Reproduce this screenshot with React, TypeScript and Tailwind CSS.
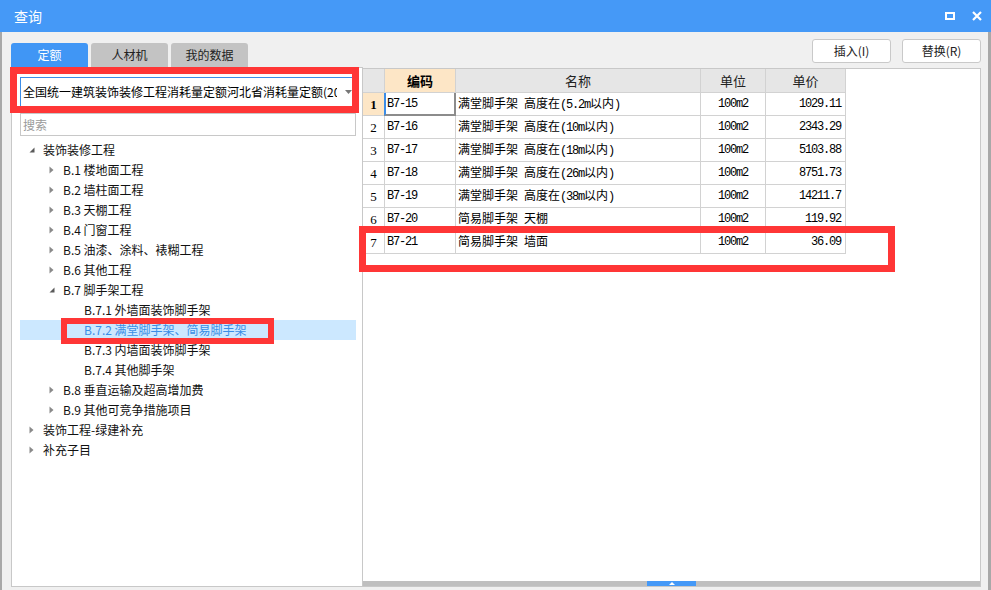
import React from "react";

type TreeNode = {
  label: string;
  level: 0 | 1 | 2;
  state?: "open" | "closed";
  selected?: boolean;
};

const tree: TreeNode[] = [
  { label: "装饰装修工程", level: 0, state: "open" },
  { label: "B.1 楼地面工程", level: 1, state: "closed" },
  { label: "B.2 墙柱面工程", level: 1, state: "closed" },
  { label: "B.3 天棚工程", level: 1, state: "closed" },
  { label: "B.4 门窗工程", level: 1, state: "closed" },
  { label: "B.5 油漆、涂料、裱糊工程", level: 1, state: "closed" },
  { label: "B.6 其他工程", level: 1, state: "closed" },
  { label: "B.7 脚手架工程", level: 1, state: "open" },
  { label: "B.7.1 外墙面装饰脚手架", level: 2 },
  { label: "B.7.2 满堂脚手架、简易脚手架", level: 2, selected: true },
  { label: "B.7.3 内墙面装饰脚手架", level: 2 },
  { label: "B.7.4 其他脚手架", level: 2 },
  { label: "B.8 垂直运输及超高增加费", level: 1, state: "closed" },
  { label: "B.9 其他可竞争措施项目", level: 1, state: "closed" },
  { label: "装饰工程-绿建补充", level: 0, state: "closed" },
  { label: "补充子目", level: 0, state: "closed" },
];

const rows = [
  { code: "B7-15", name: "满堂脚手架 高度在(5.2m以内)", unit: "100m2", price: "1029.11" },
  { code: "B7-16", name: "满堂脚手架 高度在(10m以内)", unit: "100m2", price: "2343.29" },
  { code: "B7-17", name: "满堂脚手架 高度在(18m以内)", unit: "100m2", price: "5103.88" },
  { code: "B7-18", name: "满堂脚手架 高度在(26m以内)", unit: "100m2", price: "8751.73" },
  { code: "B7-19", name: "满堂脚手架 高度在(38m以内)", unit: "100m2", price: "14211.7" },
  { code: "B7-20", name: "简易脚手架 天棚", unit: "100m2", price: "119.92" },
  { code: "B7-21", name: "简易脚手架 墙面", unit: "100m2", price: "36.09" },
];

const indent = ["pl-[8px]", "pl-[28px]", "pl-[49px]"];

// half-width latin text in the grid, like SimSun's ascii
const Mono = ({ children }: { children: React.ReactNode }) => (
  <span className="whitespace-pre font-['Liberation_Mono',monospace] text-[12px] tracking-[-1.2px]">
    {children}
  </span>
);

const MixedText = ({ text }: { text: string }) => {
  const parts = text.split(/([\x20-\x7e]+)/).filter((p) => p !== "");
  return (
    <span className="whitespace-pre">
      {parts.map((p, i) =>
        /^[\x20-\x7e]+$/.test(p) ? <Mono key={i}>{p}</Mono> : <span key={i}>{p}</span>
      )}
    </span>
  );
};

const Arrow = ({ state }: { state?: "open" | "closed" }) => {
  if (state === "open")
    return (
      <svg width="6" height="6" viewBox="0 0 6 6" className="ml-[1px]">
        <path d="M5.5 0.5 L5.5 5.5 L0.5 5.5 Z" fill="#5a5a5a" />
      </svg>
    );
  if (state === "closed")
    return (
      <svg width="5" height="8" viewBox="0 0 5 8" className="ml-[1px]">
        <path d="M0.5 0.5 L4.5 4 L0.5 7.5 Z" fill="#8a8a8a" />
      </svg>
    );
  return null;
};

export default function App() {
  return (
    <div className="relative flex h-[590px] w-[991px] flex-col overflow-hidden bg-[#f0f0f0] font-['Noto_Sans_CJK_SC','Noto_Sans',sans-serif] text-[12px] text-[#111]">
      {/* title bar */}
      <div className="flex h-[32px] shrink-0 items-center bg-[#4599f7] pl-[14px] pr-[9px] text-white">
        <span className="text-[14px] leading-none">查询</span>
        <div className="ml-auto flex items-center gap-[17px]">
          <div className="h-[8px] w-[10px] border-2 border-white" />
          <svg width="10" height="10" viewBox="0 0 10 10">
            <path d="M1 1 L9 9 M9 1 L1 9" stroke="#fff" strokeWidth="2.2" />
          </svg>
        </div>
      </div>

      <div className="flex flex-1 border-l-2 border-r-[3px] border-l-[#a8a8a8] border-r-[#a8a8a8] pl-[9px] pr-[7px]">
        {/* left column */}
        <div className="flex w-[352px] flex-col pt-[11px]">
          <div className="flex h-[24px] gap-[3px]">
            <div className="flex w-[77px] items-center justify-center rounded-t-[3px] bg-[#4096f5] text-white">
              定额
            </div>
            <div className="flex w-[77px] items-center justify-center rounded-t-[3px] bg-[#c3c3c3] text-[#222]">
              人材机
            </div>
            <div className="flex w-[77px] items-center justify-center rounded-t-[3px] bg-[#c3c3c3] text-[#222]">
              我的数据
            </div>
          </div>
          <div className="flex h-[520px] flex-col border border-[#c8c8c8] bg-white pl-[8px] pt-[9px]">
            <div className="flex h-[30px] w-[333px] items-center border border-[#3b8de8] bg-white pl-[2px]">
              <div className="w-[314px] overflow-hidden whitespace-nowrap text-[12px] leading-[14px] text-black">
                全国统一建筑装饰装修工程消耗量定额河北省消耗量定额(20
              </div>
              <svg width="7" height="4" viewBox="0 0 7 4" className="ml-[8px]">
                <path d="M0 0 L7 0 L3.5 4 Z" fill="#777" />
              </svg>
            </div>
            <div className="mt-[6px] flex h-[23px] w-[336px] items-center border border-[#c8c8c8] pl-[2px] text-[12px] text-[#9a9a9a]">
              搜索
            </div>
            <div className="mt-[4px] w-[336px]">
              {tree.map((n) => (
                <div
                  key={n.label}
                  className={`flex h-[20px] items-center ${indent[n.level]} ${
                    n.selected ? "bg-[#cce8ff] text-[#3a8ee6]" : "text-[#111]"
                  }`}
                >
                  <div className="flex w-[15px] items-center">
                    <Arrow state={n.state} />
                  </div>
                  <span className="whitespace-nowrap leading-none">{n.label}</span>
                </div>
              ))}
            </div>
          </div>
        </div>

        {/* right column */}
        <div className="flex flex-1 flex-col pt-[7px]">
          <div className="flex h-[24px] justify-end gap-[11px]">
            <button className="flex w-[79px] items-center justify-center rounded-[3px] border border-[#c9c9c9] bg-white text-[12px] text-[#222]">
              插入(I)
            </button>
            <button className="flex w-[79px] items-center justify-center rounded-[3px] border border-[#c9c9c9] bg-white text-[12px] text-[#222]">
              替换(R)
            </button>
          </div>
          <div className="mt-[5px] flex h-[519px] flex-col border-b border-r border-t border-[#c8c8c8] bg-white">
            <div className="flex flex-col text-black">
              <div className="flex h-[24px] text-[13px] leading-none">
                <div className="w-[22px] border-b border-r border-[#d2d2d2] bg-[#e6e6e6]" />
                <div className="flex w-[71px] items-center justify-center border-b border-r border-[#d2d2d2] bg-[#fde6c6] font-bold">
                  编码
                </div>
                <div className="flex w-[245px] items-center justify-center border-b border-r border-[#d2d2d2] bg-[#e6e6e6] text-[#222]">
                  名称
                </div>
                <div className="flex w-[65px] items-center justify-center border-b border-r border-[#d2d2d2] bg-[#e6e6e6] text-[#222]">
                  单位
                </div>
                <div className="flex w-[80px] items-center justify-center border-b border-r border-[#d2d2d2] bg-[#e6e6e6] text-[#222]">
                  单价
                </div>
              </div>
              {rows.map((r, i) => (
                <div key={r.code} className="flex h-[23px] leading-none">
                  <div
                    className={`flex w-[22px] items-center justify-center border-b border-r border-[#d2d2d2] font-['Liberation_Serif',serif] text-[13px] ${
                      i === 0 ? "bg-[#fde6c6] font-bold" : "bg-white"
                    }`}
                  >
                    {i + 1}
                  </div>
                  <div className="relative flex w-[71px] items-center border-b border-r border-[#d2d2d2] pl-[2px]">
                    {i === 0 && (
                      <div className="absolute -bottom-px -left-px -right-px top-0 border-b-2 border-l-2 border-r-2 border-b-[#8c8c8c] border-l-[#3b8de8] border-r-[#8c8c8c]" />
                    )}
                    <Mono>{r.code}</Mono>
                  </div>
                  <div className="flex w-[245px] items-center border-b border-r border-[#d2d2d2] pl-[2px] text-[12px]">
                    <MixedText text={r.name} />
                  </div>
                  <div className="flex w-[65px] items-center justify-center border-b border-r border-[#d2d2d2]">
                    <Mono>{r.unit}</Mono>
                  </div>
                  <div className="flex w-[80px] items-center justify-end border-b border-r border-[#d2d2d2] pr-[4px]">
                    <Mono>{r.price}</Mono>
                  </div>
                </div>
              ))}
            </div>
            <div className="flex-1" />
            <div className="flex h-[5px] bg-[#bfbfbf]">
              <div className="ml-[284px] flex w-[49px] items-center justify-center bg-[#4599f7]">
                <svg width="6" height="3" viewBox="0 0 6 3">
                  <path d="M0 3 L3 0 L6 3 Z" fill="#fff" />
                </svg>
              </div>
            </div>
          </div>
        </div>
      </div>

      {/* red annotation boxes */}
      <div className="absolute left-[10px] top-[67px] h-[46px] w-[349px] border-[7px] border-[#ff3636]" />
      <div className="absolute left-[61px] top-[318px] h-[26px] w-[213px] border-[6px] border-[#ff3636]" />
      <div className="absolute left-[359px] top-[226px] h-[46px] w-[536px] border-[7px] border-[#ff3636]" />
    </div>
  );
}
